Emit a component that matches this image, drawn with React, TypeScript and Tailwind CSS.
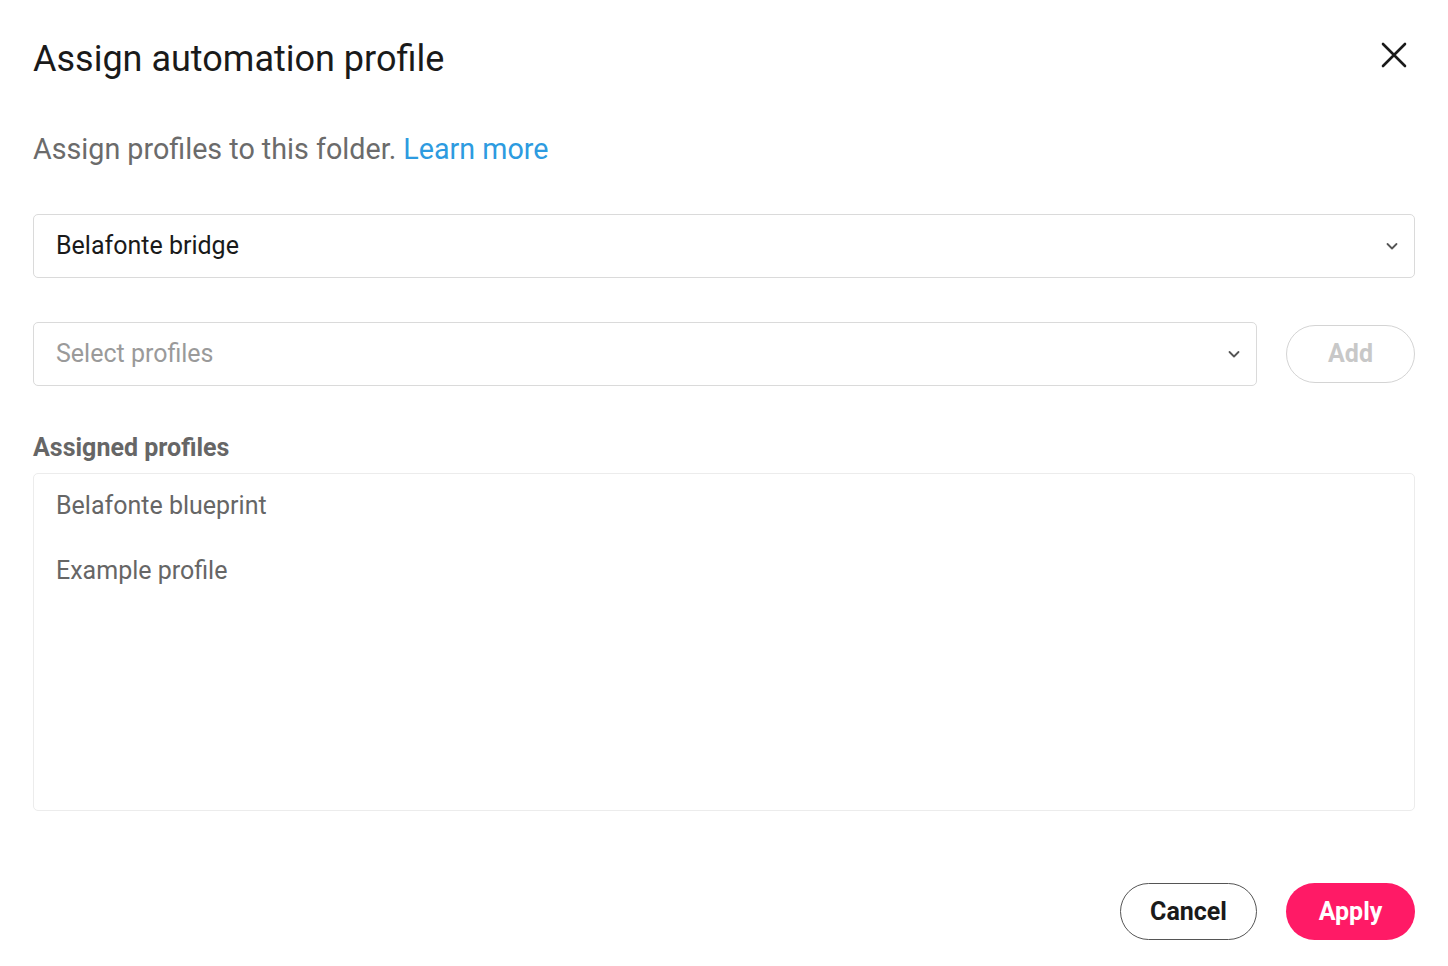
import React from "react";

const Chevron = () => (
  <svg width="14" height="14" viewBox="0 0 14 14" fill="none" className="shrink-0">
    <path d="M2.5 5l4.5 4.5L11.5 5" stroke="#555" strokeWidth="1.8" strokeLinecap="round" strokeLinejoin="round" />
  </svg>
);

const CloseIcon = () => (
  <svg width="26" height="26" viewBox="0 0 26 26" fill="none">
    <path d="M2 2l22 22M24 2L2 24" stroke="#1a1a1a" strokeWidth="2.6" strokeLinecap="round" />
  </svg>
);

export default function App() {
  const assigned = ["Belafonte blueprint", "Example profile"];

  return (
    <div className="w-[1448px] h-[966px] bg-white pl-[33px] pr-[33px] pt-[35px] font-['Roboto',sans-serif]">
      <div className="flex items-center justify-between">
        <h1 className="text-[36px] leading-[48px] text-[#1a1a1a]">Assign automation profile</h1>
        <button className="mr-[8px] mt-[-8px]">
          <CloseIcon />
        </button>
      </div>

      <p className="mt-[46px] text-[28.7px] leading-[40px] text-[#6b6b6b]">
        Assign profiles to this folder. <a className="text-[#2d9be0]">Learn more</a>
      </p>

      <div className="mt-[45px] h-[64px] border border-[#dadada] rounded-[5px] flex items-center justify-between pl-[22px] pr-[15px]">
        <span className="text-[25px] text-[#1a1a1a]">Belafonte bridge</span>
        <Chevron />
      </div>

      <div className="mt-[44px] flex items-center gap-[29px]">
        <div className="flex-1 h-[64px] border border-[#dadada] rounded-[5px] flex items-center justify-between pl-[22px] pr-[15px]">
          <span className="text-[25px] text-[#9a9a9a]">Select profiles</span>
          <Chevron />
        </div>
        <button className="w-[129px] h-[58px] rounded-full border border-[#d4d4d4] text-[25px] font-bold text-[#c8c8c8]">
          Add
        </button>
      </div>

      <h2 className="mt-[46px] text-[25px] leading-[32px] font-bold text-[#666]">Assigned profiles</h2>

      <div className="mt-[9px] h-[338px] border border-[#ececec] rounded-[5px] pl-[22px] pt-[14px]">
        {assigned.map((name) => (
          <div key={name} className="text-[25px] leading-[36px] h-[65px] text-[#666]">
            {name}
          </div>
        ))}
      </div>

      <div className="mt-[72px] flex justify-end gap-[29px]">
        <button className="w-[137px] h-[57px] rounded-full border border-[#555] text-[25px] font-bold text-[#1a1a1a]">
          Cancel
        </button>
        <button className="w-[129px] h-[57px] rounded-full bg-[#ff1a66] text-[25px] font-bold text-white">
          Apply
        </button>
      </div>
    </div>
  );
}
